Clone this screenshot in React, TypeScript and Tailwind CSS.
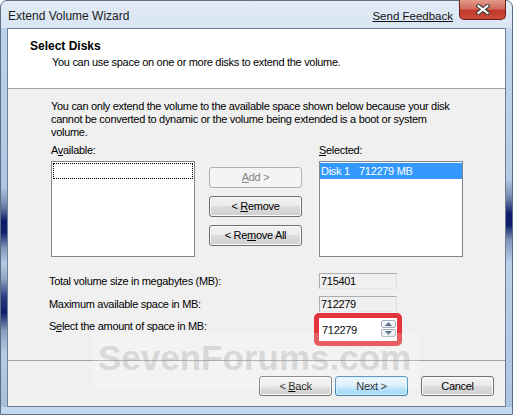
import type { ReactNode } from "react";

const Btn = ({
  children,
  className = "",
  kind = "normal"
}: {
  children: ReactNode;
  className?: string;
  kind?: "normal" | "default" | "disabled";
}) => {
  const look =
    kind === "disabled"
      ? "border-[#adb2b5] bg-[#f4f4f4] text-[#838383]"
      : kind === "default"
      ? "border-[#3c7fb1] bg-[linear-gradient(180deg,#eaf6fd_0%,#d9f0fc_49%,#bee6fd_50%,#a7d9f5_100%)] shadow-[inset_0_0_0_1px_#d4efff]"
      : "border-[#707070] bg-[linear-gradient(180deg,#f2f2f2_0%,#ebebeb_49%,#dddddd_50%,#cfcfcf_100%)] shadow-[inset_0_0_0_1px_#fbfbfb]";
  return (
    <div className={`flex items-center justify-center whitespace-pre rounded-[3px] border leading-none ${look} ${className}`}>
      {children}
    </div>
  );
};

const ReadOnlyBox = ({ value }: { value: string }) => (
  <div className="flex h-[16px] w-[78px] items-center border border-[#abadb3] border-b-[#e3e9ef] border-r-[#dbdfe6] bg-[#f0f0f0] pl-[1px] leading-none">
    {value}
  </div>
);

const SpinArrow = ({ up }: { up?: boolean }) => (
  <div className="flex h-[8px] w-[15px] items-center justify-center rounded-[2px] border border-[#a7b0bc] bg-[linear-gradient(180deg,#f7f9fb,#e3e8ee)]">
    <svg width="7" height="4" viewBox="0 0 7 4">
      <polygon points={up ? "3.5,0 7,4 0,4" : "0,0 7,0 3.5,4"} fill="#5c6f8a" />
    </svg>
  </div>
);

const CloseButton = () => (
  <div className="-mt-[1px] ml-[6px] mr-[6px] flex h-[20px] w-[47px] items-center justify-center rounded-b-[5px] border border-t-0 border-[#6e1f1f] bg-[linear-gradient(180deg,#e39a8b_0%,#d26b5c_45%,#c0392c_55%,#cc4a36_100%)]">
    <svg width="14" height="11" viewBox="0 0 14 11">
      <path d="M2.5 2 L11.5 9 M11.5 2 L2.5 9" stroke="#3b3b3b" strokeWidth="4.2" strokeLinecap="square" />
      <path d="M2.5 2 L11.5 9 M11.5 2 L2.5 9" stroke="#ffffff" strokeWidth="2.2" strokeLinecap="square" />
    </svg>
  </div>
);

export default function App() {
  return (
    <div className="relative h-[415px] w-[513px] overflow-hidden bg-white font-['Liberation_Sans',Arial,sans-serif] text-[11px] tracking-[-0.3px] text-black">
      <div className="flex h-full flex-col rounded-t-[7px] border border-[#5c6f86] bg-[linear-gradient(180deg,#e2ebf6_0%,#d3e2f2_10%,#c3d7ed_100%)]">
        {/* title bar */}
        <div className="flex h-[27px] items-start">
          <div className="flex-1 pl-[7px] pt-[7px] text-[12px] leading-[16px] tracking-normal text-[#1b1b1b]">
            Extend Volume Wizard
          </div>
          <div className="pt-[7px] text-[11.5px] leading-[16px] tracking-normal text-[#111] underline">
            Send Feedback
          </div>
          <CloseButton />
        </div>

        <div className="flex flex-1">
          <div className="w-[6px] bg-[linear-gradient(180deg,#bcd3ec_0%,#aec7e4_42%,#6e83ab_47%,#0c1c6a_51%,#10206e_54%,#8196bb_58%,#b3cae5_62%,#93a8c6_66%,#2a3a80_71%,#0c1c6a_75%,#8a9fc0_80%,#b6cde8_86%,#a6bdd8_100%)]" />

          <div className="flex w-[499px] flex-col border border-[#6e7f94] bg-[#f0f0f0]">
            {/* header */}
            <div className="h-[60px] border-b border-[#a0a0a0] bg-white pl-[22px] pt-[10px]">
              <div className="text-[12px] font-bold leading-[15px] tracking-normal">Select Disks</div>
              <div className="mt-[1px] pl-[22px] leading-[15px]">
                You can use space on one or more disks to extend the volume.
              </div>
            </div>

            {/* body */}
            <div className="flex-1 pl-[43px] pt-[11px]">
              <p className="whitespace-nowrap leading-[13px]">
                You can only extend the volume to the available space shown below because your disk
                <br />
                cannot be converted to dynamic or the volume being extended is a boot or system
                <br />
                volume.
              </p>

              <div className="mt-[5px] flex">
                <div className="w-[144px]">
                  <div className="leading-[13px]">
                    A<u>v</u>ailable:
                  </div>
                  <div className="mt-[4px] h-[96px] border border-[#828790] bg-white">
                    <div className="m-px h-[16px] border border-dotted border-black" />
                  </div>
                </div>

                <div className="ml-[14px] flex w-[93px] flex-col gap-[8px] pt-[23px]">
                  <Btn kind="disabled" className="h-[21px]">
                    <u>A</u>
                    {"dd >"}
                  </Btn>
                  <Btn className="h-[21px]">
                    {"< "}
                    <u>R</u>
                    {"emove"}
                  </Btn>
                  <Btn className="h-[21px]">
                    {"< Re"}
                    <u>m</u>
                    {"ove All"}
                  </Btn>
                </div>

                <div className="ml-[17px] w-[144px]">
                  <div className="leading-[13px]">
                    <u>S</u>elected:
                  </div>
                  <div className="mt-[4px] h-[96px] border border-[#828790] bg-white">
                    <div className="mt-px flex h-[16px] items-center whitespace-nowrap bg-[#3399ff] pl-[1px] leading-none text-white">
                      <span className="w-[38px] shrink-0">Disk 1</span>
                      <span>712279 MB</span>
                    </div>
                  </div>
                </div>
              </div>

              {/* size fields */}
              <div className="-ml-[2px] mt-[16px]">
                <div className="flex h-[16px] items-center">
                  <div className="w-[270px]">Total volume size in megabytes (MB):</div>
                  <ReadOnlyBox value="715401" />
                </div>
                <div className="mt-[7px] flex h-[16px] items-center">
                  <div className="w-[270px]">Maximum available space in MB:</div>
                  <ReadOnlyBox value="712279" />
                </div>
                <div className="mt-[1px] flex items-start">
                  <div className="w-[270px] pt-[7px] leading-[13px]">
                    S<u>e</u>lect the amount of space in MB:
                  </div>
                  <div className="-ml-[5px] h-[33px] w-[88px] rounded-[5px] border-[5px] border-[#e3343c]">
                    <div className="flex h-full items-start bg-white">
                      <div className="flex-1 pl-[3px] pt-[6px] leading-[12px]">712279</div>
                      <div className="mr-[1px] mt-[2px] flex flex-col gap-px">
                        <SpinArrow up />
                        <SpinArrow />
                      </div>
                    </div>
                  </div>
                </div>
              </div>
            </div>

            {/* footer buttons */}
            <div className="flex h-[46px] items-start justify-end border-t border-[#a0a0a0] pr-[11px] pt-[15px]">
              <Btn className="h-[20px] w-[73px]">
                {"< "}
                <u>B</u>
                {"ack"}
              </Btn>
              <Btn kind="default" className="ml-[3px] h-[20px] w-[73px]">
                {"Next >"}
              </Btn>
              <Btn className="ml-[13px] h-[20px] w-[73px]">Cancel</Btn>
            </div>
          </div>

          <div className="w-[6px] bg-[linear-gradient(180deg,#c3d7ed_0%,#b4cbe6_40%,#6e83ab_45%,#0c1c6a_49%,#10206e_52%,#8196bb_56%,#b9cfe9_62%,#aec5e2_100%)]" />
        </div>

        <div className="h-[7px]" />
      </div>

      {/* watermark */}
      <div className="pointer-events-none absolute left-[92px] top-[333px] h-[56px] w-[328px] bg-white/20">
        <div className="pl-[6px] pt-[7px] font-['Liberation_Sans',Arial,sans-serif] text-[35px] font-bold leading-[35px] tracking-normal text-[rgba(150,150,150,0.3)]">
          SevenForums.com
        </div>
      </div>
    </div>
  );
}
